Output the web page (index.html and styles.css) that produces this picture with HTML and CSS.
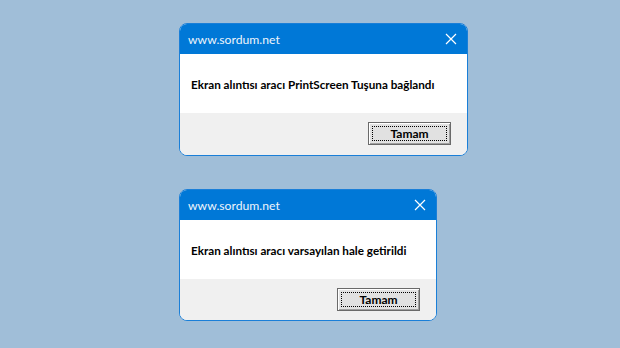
FILE: index.html
```html
<!DOCTYPE html>
<html lang="tr">
	<head>
		<meta charset="UTF-8" />
		<title>sordum.net</title>
		<link rel="stylesheet" href="styles.css">
	</head>
	<body>
		<main class="stack">
			<section class="dialog wide">
				<header class="titlebar">
					<span class="title">www.sordum.net</span>
					<svg class="close" width="12" height="12" viewBox="0 0 12 12"><path d="M1 1L11 11M11 1L1 11" stroke="#fff" stroke-width="1.2" fill="none"/></svg>
				</header>
				<div class="message">Ekran alıntısı aracı PrintScreen Tuşuna bağlandı</div>
				<footer class="actions">
					<button type="button" class="classic">Tamam</button>
				</footer>
			</section>
			<section class="dialog narrow">
				<header class="titlebar">
					<span class="title">www.sordum.net</span>
					<svg class="close" width="12" height="12" viewBox="0 0 12 12"><path d="M1 1L11 11M11 1L1 11" stroke="#fff" stroke-width="1.2" fill="none"/></svg>
				</header>
				<div class="message">Ekran alıntısı aracı varsayılan hale getirildi</div>
				<footer class="actions">
					<button type="button" class="classic">Tamam</button>
				</footer>
			</section>
		</main>
	</body>
</html>
```
FILE: styles.css
```css
body {
	margin: 0;
	background: #a0bed8;
	font-family: Lato, 'Open Sans', sans-serif;
}
.stack {
	display: flex;
	flex-direction: column;
	align-items: flex-start;
	gap: 33px;
	padding: 23px 0 0 179px;
}
.dialog {
	display: flex;
	flex-direction: column;
	border: 1px solid #1a7fd8;
	border-radius: 8px;
	overflow: hidden;
	background: #fff;
}
.wide {
	width: 287px;
	height: 131px;
}
.narrow {
	width: 256px;
	height: 130px;
}
.titlebar {
	display: flex;
	align-items: center;
	justify-content: space-between;
	height: 30px;
	padding: 0 10px 0 8px;
	background: #0078d7;
	color: #eef4fb;
}
.title {
	font-size: 12.2px;
}
.close {
	display: block;
}
.message {
	display: flex;
	align-items: center;
	height: 59px;
	padding-left: 11px;
	font-size: 11.7px;
	font-weight: 700;
	color: #000;
}
.actions {
	flex: 1;
	display: flex;
	justify-content: flex-end;
	align-items: flex-start;
	padding: 9px 16px 0 0;
	background: #f0f0f0;
}
.classic {
	width: 83px;
	height: 23px;
	padding: 0;
	border: 1px solid #6a6a6a;
	box-shadow: inset 1px 1px 0 #fff, inset -1px -1px 0 #a0a0a0, inset 0 0 0 2px #e3e3e3;
	background: #e1e1e1;
	font-family: inherit;
	font-size: 12px;
	font-weight: 700;
	color: #000;
	outline: 1px dotted #000;
	outline-offset: -5px;
}
```
